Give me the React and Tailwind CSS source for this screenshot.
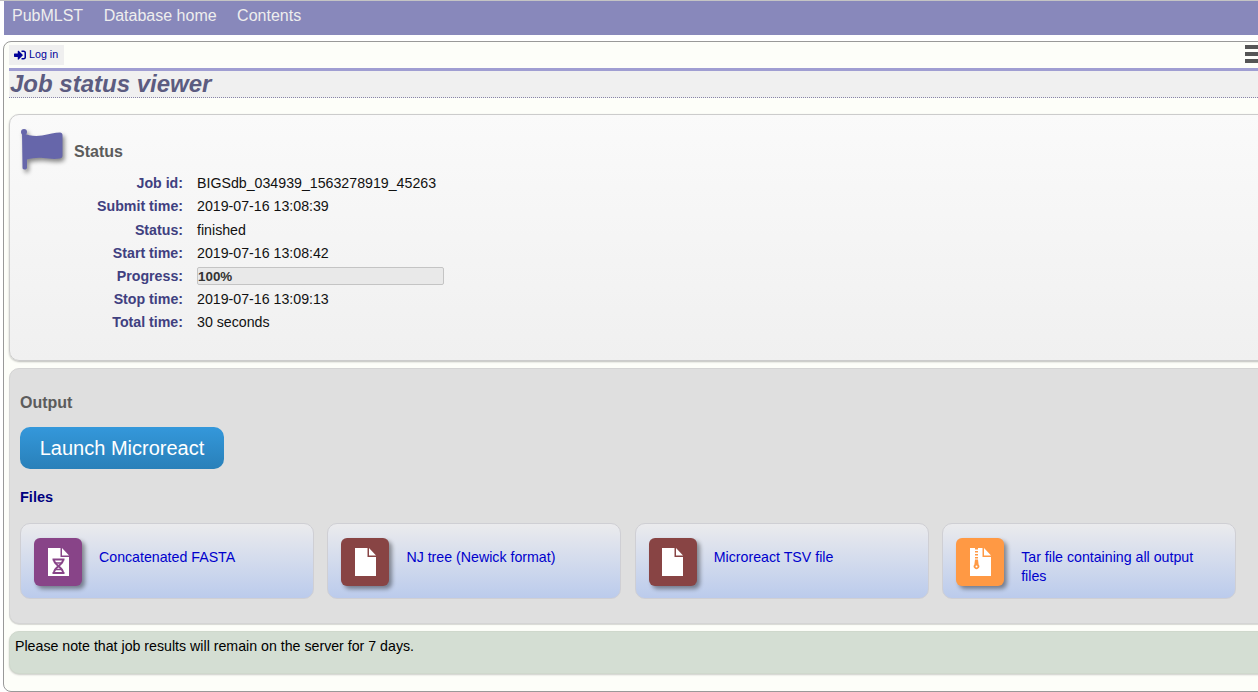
import React from 'react'
import { FaSignInAlt } from 'react-icons/fa'

const rows = [
  ['Job id:', 'BIGSdb_034939_1563278919_45263'],
  ['Submit time:', '2019-07-16 13:08:39'],
  ['Status:', 'finished'],
  ['Start time:', '2019-07-16 13:08:42'],
  ['Progress:', null],
  ['Stop time:', '2019-07-16 13:09:13'],
  ['Total time:', '30 seconds'],
]

function FileTile({ bg, children }) {
  return (
    <div className={`w-12 h-12 shrink-0 rounded-md flex items-center justify-center shadow-[3px_3px_4px_rgba(0,0,0,0.4)] ${bg}`}>
      <svg width="21" height="28" viewBox="0 0 21 28">
        <path d="M0 0H12.5V9H21V28H0Z" fill="#fff" />
        <path d="M14 0L21 7.5H14Z" fill="#fff" />
        {children}
      </svg>
    </div>
  )
}

function Card({ bg, label, children }) {
  return (
    <div className="w-[294px] h-[76px] shrink-0 rounded-[10px] border border-[#cfcfd4] bg-gradient-to-b from-[#ebebed] to-[#bbcbec] pl-[13px] pr-[24px] pt-[14px] flex items-start gap-[17px]">
      <FileTile bg={bg}>{children}</FileTile>
      <a className="mt-[10px] text-[14.2px] leading-[19px] text-[#0000cc]">{label}</a>
    </div>
  )
}

export default function App() {
  return (
    <div className="w-[1258px] h-[692px] overflow-hidden bg-white font-['Liberation_Sans',Arial,sans-serif] text-[14.2px] text-black">
      <div className="h-px bg-[#c4c4c4]" />
      <nav className="ml-1 h-[34px] bg-[#8888bb] flex items-center pl-2 pb-[4px] gap-[20.5px] text-[16px] text-[#eeeeee]">
        <span>PubMLST</span>
        <span>Database home</span>
        <span>Contents</span>
      </nav>

      <div className="relative mt-[6px] ml-[3px] w-[1300px] h-[651px] border border-[#999] rounded-lg bg-[#fdfef9] pl-[5px] pt-[3px]">
        <a className="w-[55px] h-[20px] bg-[#efefef] flex items-center gap-[3px] pl-[5px] pb-[1px] text-[10.7px] text-[#000099]">
          <FaSignInAlt size={12} />
          <span>Log in</span>
        </a>
        <div className="absolute top-[3px] left-[1241px] w-[20px] flex flex-col gap-[3px]">
          <div className="h-1 bg-[#555]" />
          <div className="h-1 bg-[#555]" />
          <div className="h-1 bg-[#555]" />
        </div>

        <div className="mt-[3px] h-[30px] border-t-[3px] border-[#a09ed2] border-b border-b-[#8885a8] [border-bottom-style:dotted] bg-[#f0f0f0] pl-px">
          <h1 className="text-[24px] leading-[25px] font-bold italic text-[#5c5c80]">Job status viewer</h1>
        </div>

        <section className="mt-[16px] h-[247px] rounded-[10px] border border-[#cccccc] bg-gradient-to-b from-[#fafafa] to-[#f0f0f0] shadow-[0_1px_2px_rgba(0,0,0,0.25)] pt-[13px] pl-[11px]">
          <div className="flex items-start h-[43px]">
            <svg width="44" height="43" viewBox="0 0 44 43" className="drop-shadow-[2px_3px_2px_rgba(0,0,0,0.45)]">
              <circle cx="3" cy="4" r="3" fill="#6666aa" />
              <path d="M1 5C8 8 15 8.5 21 7.5C28 6 34 4.5 39 4.5C40.5 4.5 41.5 5.5 41.5 7V27.5C41.5 29.5 40.5 30.5 38.5 30.5C33 31.5 28 30.5 22 30C15 29.5 11 30.5 6 31.5V39.5C6 41 5 41.5 3.5 41.5C2 41.5 1.5 40.5 1.5 39.5Z" fill="#6666aa" />
            </svg>
            <h2 className="ml-[9px] mt-[14px] text-[16px] leading-[20px] font-bold text-[#5c5c5c]">Status</h2>
          </div>
          <dl className="mt-[1.2px] -ml-[11px]">
            {rows.map(([k, v]) => (
              <div key={k} className="flex items-center h-[23.2px]">
                <dt className="w-[173px] text-right font-bold text-[#404080]">{k}</dt>
                <dd className="ml-[14px] text-[#111]">
                  {v ?? (
                    <div className="w-[247px] h-[18px] mb-[2px] rounded-[2px] border border-[#c4c4c4] bg-[#e9e9e9] text-[13.4px] leading-[18px] font-bold text-[#333]">100%</div>
                  )}
                </dd>
              </div>
            ))}
          </dl>
        </section>

        <section className="mt-[7px] h-[256px] rounded-[10px] border border-[#d4d4d4] bg-[#dfdfdf] shadow-[0_1px_1px_rgba(0,0,0,0.15)] pt-[24px] pl-[10px]">
          <h2 className="text-[16px] leading-[20px] font-bold text-[#5c5c5c]">Output</h2>
          <button className="mt-[14px] w-[204px] h-[42px] rounded-[10px] bg-gradient-to-b from-[#3498db] to-[#2980b9] text-[20px] text-white block">Launch Microreact</button>
          <h3 className="mt-[19px] text-[14.5px] leading-[18px] font-bold text-[#000080]">Files</h3>
          <div className="mt-[17px] flex gap-[13.4px]">
            <Card bg="bg-[#884488]" label="Concatenated FASTA">
              <path d="M4.5 11.5H16.5M4.5 25H16.5" stroke="#884488" strokeWidth="2" />
              <path d="M6 12C6 17 15 19 15 24.5M15 12C15 17 6 19 6 24.5" fill="none" stroke="#884488" strokeWidth="2" />
              <path d="M7 15H14M7 21.5H14" stroke="#884488" strokeWidth="1.4" />
            </Card>
            <Card bg="bg-[#884444]" label="NJ tree (Newick format)" />
            <Card bg="bg-[#884444]" label="Microreact TSV file" />
            <Card bg="bg-[#ff9944]" label="Tar file containing all output files">
              <path d="M6.5 0V11.5" stroke="#ff9944" strokeWidth="3" strokeDasharray="1.5 1.5" />
              <path d="M5 11.5H8L8.6 16.5A2.8 2.8 0 1 1 4.4 16.5Z" fill="#ff9944" />
              <circle cx="6.5" cy="18.5" r="1" fill="#fff" />
            </Card>
          </div>
        </section>

        <section className="mt-[7px] h-[43px] rounded-[10px] border border-[#cfd8cc] bg-[#d4ded3] shadow-[0_1px_2px_rgba(0,0,0,0.2)] pl-[5px] pt-[5px] leading-[18px]">
          Please note that job results will remain on the server for 7 days.
        </section>
      </div>
    </div>
  )
}
